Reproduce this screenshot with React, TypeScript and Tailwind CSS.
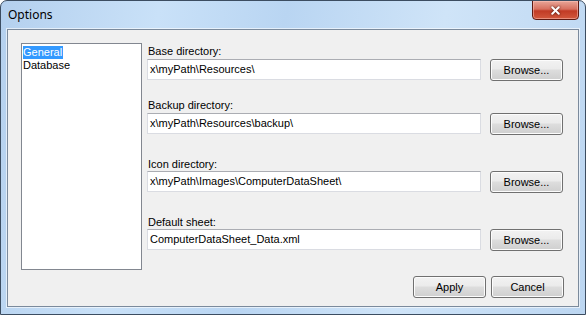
import { X } from 'lucide-react';

const rows = [
  { label: 'Base directory:', value: 'x\\myPath\\Resources\\', labelGap: 'mt-[2px]', boxGap: 'mt-[1px]' },
  { label: 'Backup directory:', value: 'x\\myPath\\Resources\\backup\\', labelGap: 'mt-[18px]', boxGap: 'mt-[1px]' },
  { label: 'Icon directory:', value: 'x\\myPath\\Images\\ComputerDataSheet\\', labelGap: 'mt-[23px]', boxGap: 'mt-0' },
  { label: 'Default sheet:', value: 'ComputerDataSheet_Data.xml', labelGap: 'mt-[23px]', boxGap: 'mt-0' },
];

function WinButton({ children, className = '' }: { children: React.ReactNode; className?: string }) {
  return (
    <div
      className={`h-[22px] rounded-[3px] border border-[#707070] bg-[linear-gradient(#f2f2f2_0%,#ebebeb_45%,#dddddd_50%,#cfcfcf_100%)] shadow-[inset_0_0_0_1px_#fcfcfc] flex items-center justify-center text-[11px] text-black ${className}`}
    >
      {children}
    </div>
  );
}

export default function App() {
  return (
    <div
      className="w-[586px] h-[315px] flex flex-col rounded-t-[7px] border border-[#3c4d61] bg-[linear-gradient(100deg,#b4d0ee_0%,#c9e1f8_25%,#b9d5f2_45%,#cfe4f8_70%,#bcd6f1_100%)] overflow-hidden"
      style={{ fontFamily: '"Liberation Sans", Arial, sans-serif' }}
    >
      {/* title bar */}
      <div className="h-[28px] flex items-start shrink-0 relative">
        <span className="ml-[7px] mt-[6px] text-[12px] leading-[15px] text-black" style={{ fontFamily: '"Noto Sans", "Liberation Sans", sans-serif' }}>
          Options
        </span>
        <div className="absolute right-[6px] -top-px w-[47px] h-[20px] rounded-b-[4px] border border-[#5e1a12] bg-[linear-gradient(#e8a598_0%,#d7705f_45%,#c13b25_55%,#d2583d_100%)] shadow-[inset_0_0_0_1px_rgba(255,200,190,0.5)] flex items-center justify-center">
          <X className="w-[13px] h-[13px] text-white" strokeWidth={3.6} style={{ filter: 'drop-shadow(0 0 1px #3a1008)' }} />
        </div>
      </div>

      {/* client area */}
      <div className="mx-[6px] mb-[7px] flex-1 border border-[#7b8a9c] bg-[#f0f0f0] flex flex-col shadow-[0_0_0_1px_rgba(255,255,255,0.6)]">
        <div className="flex pl-[13px] pt-[13px]">
          <div className="w-[121px] h-[227px] border border-[#828790] bg-white pl-px pt-[2px] text-[11px] leading-[13px]">
            <div className="inline-block bg-[#3399ff] text-white pr-px">General</div>
            <div className="text-black">Database</div>
          </div>
          <div className="ml-[5px] w-[417px] flex flex-col">
            {rows.map((r) => (
              <div key={r.label}>
                <div className={`${r.labelGap} h-[13px] pl-px text-[11px] leading-[13px] text-black`}>{r.label}</div>
                <div className={`${r.boxGap} flex items-start`}>
                  <div className="w-[334px] h-[21px] border border-[#dadce2] border-t-[#abadb3] bg-white pl-[2px] text-[11px] leading-[19px] text-black whitespace-nowrap overflow-hidden">
                    {r.value}
                  </div>
                  <WinButton className="ml-[9px] w-[73px]">Browse...</WinButton>
                </div>
              </div>
            ))}
          </div>
        </div>
        <div className="flex justify-end gap-[5px] mt-[6px] pr-[14px]">
          <WinButton className="w-[73px]">Apply</WinButton>
          <WinButton className="w-[73px]">Cancel</WinButton>
        </div>
      </div>
    </div>
  );
}
